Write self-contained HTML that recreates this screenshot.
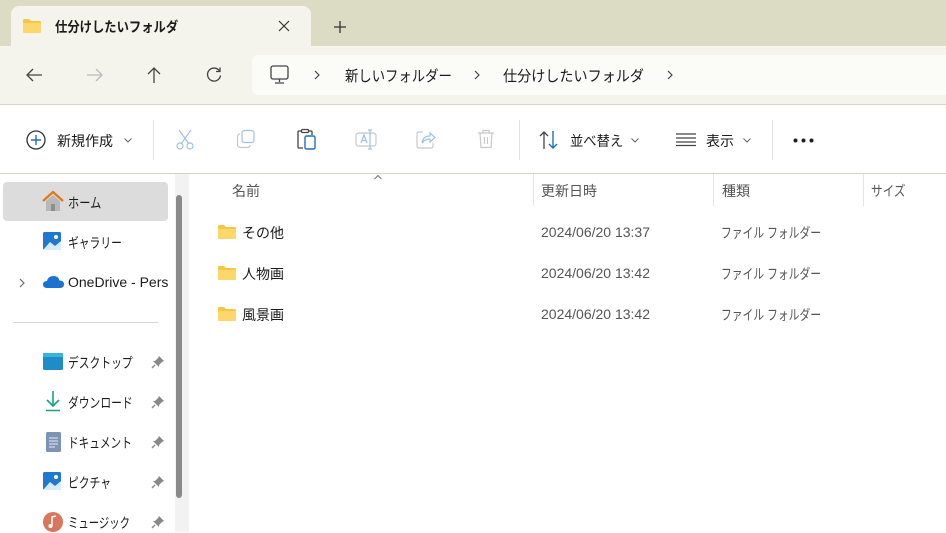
<!DOCTYPE html>
<html><head><meta charset="utf-8"><style>
*{margin:0;padding:0;box-sizing:border-box}
body{width:946px;height:532px;overflow:hidden;background:#fff;font-family:"Liberation Sans","Noto Sans CJK JP",sans-serif;color:#1a1a1a;position:relative;font-size:14px}
.a{position:absolute}
.t{white-space:nowrap;transform-origin:0 50%}
svg{position:absolute;overflow:visible}
</style></head><body>
<div class="a" style="left:0;top:0;width:946px;height:47px;background:#dcdbc3"></div>
<div class="a" style="left:11px;top:6px;width:300px;height:41px;background:#f4f3ec;border-radius:8px 8px 0 0"></div>
<div class="a" style="left:0;top:46px;width:946px;height:59px;background:#f4f3ec;border-bottom:1px solid #d8d5c4"></div>
<!-- tab -->
<svg style="left:23px;top:19px" width="18" height="14"><path d="M0 1.5Q0 0 1.5 0H6L8 2H16.5Q18 2 18 3.5V12.5Q18 14 16.5 14H1.5Q0 14 0 12.5Z" fill="#f7c744"/><path d="M0 4H18V12.5Q18 14 16.5 14H1.5Q0 14 0 12.5Z" fill="#fcd86a"/></svg>
<div class="a t" style="left:55px;top:17px;font-size:14px;font-weight:bold;transform:scaleX(0.88)">仕分けしたいフォルダ</div>
<svg style="left:279px;top:21px" width="10" height="10"><path d="M0 0L10 10M10 0L0 10" stroke="#333" stroke-width="1.2"/></svg>
<svg style="left:334px;top:21px" width="12" height="12"><path d="M6 0V12M0 6H12" stroke="#333" stroke-width="1.3"/></svg>
<!-- nav -->
<svg style="left:26px;top:68px" width="16" height="14"><path d="M16 7H1M7 1L1 7L7 13" stroke="#444" stroke-width="1.3" fill="none"/></svg>
<svg style="left:87px;top:68px" width="16" height="14"><path d="M0 7H15M9 1L15 7L9 13" stroke="#bbb" stroke-width="1.3" fill="none"/></svg>
<svg style="left:147px;top:67px" width="14" height="16"><path d="M7 16V1M1 7L7 1L13 7" stroke="#444" stroke-width="1.3" fill="none"/></svg>
<svg style="left:206px;top:67px" width="16" height="16"><path d="M13.5 4A6.5 6.5 0 1 0 14.5 8.5M14 0.5V4.5H10" stroke="#444" stroke-width="1.3" fill="none"/></svg>
<div class="a" style="left:252px;top:55px;width:694px;height:40px;background:#fbfbf8;border-radius:6px 0 0 6px"></div>
<svg style="left:270px;top:65px" width="20" height="19"><rect x="1" y="1" width="17" height="13" rx="2" fill="none" stroke="#444" stroke-width="1.3"/><path d="M9.5 14V17M5 18H14" stroke="#444" stroke-width="1.3"/></svg>
<svg style="left:314px;top:70px" width="6" height="10"><path d="M1 1L5 5L1 9" fill="none" stroke="#444" stroke-width="1.2"/></svg>
<div class="a t" style="left:345px;top:65px;font-size:15px;transform:scaleX(0.89)">新しいフォルダー</div>
<svg style="left:474px;top:70px" width="6" height="10"><path d="M1 1L5 5L1 9" fill="none" stroke="#444" stroke-width="1.2"/></svg>
<div class="a t" style="left:503px;top:65px;font-size:15px;transform:scaleX(0.94)">仕分けしたいフォルダ</div>
<svg style="left:667px;top:70px" width="6" height="10"><path d="M1 1L5 5L1 9" fill="none" stroke="#444" stroke-width="1.2"/></svg>
<!-- toolbar -->
<svg style="left:26px;top:130px" width="20" height="20"><circle cx="10" cy="10" r="9" fill="none" stroke="#333" stroke-width="1.3"/><path d="M10 5V15M5 10H15" stroke="#1f6fc0" stroke-width="1.4"/></svg>
<div class="a t" style="left:57px;top:131px;font-size:14px">新規作成</div>
<svg style="left:124px;top:138px" width="8" height="5"><path d="M0.5 0.5L4 4L7.5 0.5" fill="none" stroke="#666" stroke-width="1"/></svg>
<div class="a" style="left:153px;top:120px;width:1px;height:40px;background:#e3e3e3"></div>
<svg style="left:176px;top:130px" width="18" height="20"><path d="M3 0L13 14M15 0L5 14" stroke="#9cc2e6" stroke-width="1.2"/><circle cx="4" cy="16" r="3" fill="none" stroke="#9cc2e6" stroke-width="1.2"/><circle cx="14" cy="16" r="3" fill="none" stroke="#9cc2e6" stroke-width="1.2"/></svg>
<svg style="left:237px;top:130px" width="18" height="18"><rect x="5" y="0.5" width="12" height="12" rx="2.5" fill="none" stroke="#9cc2e6" stroke-width="1.2"/><path d="M3 4Q0.5 4 0.5 7V14Q0.5 17.5 4 17.5H10Q13 17.5 13 15" fill="none" stroke="#c8c8c8" stroke-width="1.2"/></svg>
<svg style="left:297px;top:129px" width="20" height="21"><path d="M5 2H2Q1 2 1 3V18Q1 19 2 19H6M11 2H14Q15 2 15 3V6" fill="none" stroke="#444" stroke-width="1.3"/><rect x="4.5" y="0.5" width="7" height="3" rx="1" fill="none" stroke="#444" stroke-width="1.2"/><rect x="8" y="7" width="10" height="13" rx="1.5" fill="none" stroke="#1f6fc0" stroke-width="1.4"/></svg>
<svg style="left:355px;top:130px" width="22" height="20"><rect x="1" y="3" width="20" height="13" rx="2.5" fill="none" stroke="#c8c8c8" stroke-width="1.2"/><path d="M6 13L9 5L12 13M7 10.5H11M15 0V19M13 0H17M13 19H17" fill="none" stroke="#9cc2e6" stroke-width="1.2"/></svg>
<svg style="left:416px;top:130px" width="20" height="19"><path d="M7 2H3Q1 2 1 4V16Q1 18 3 18H15Q17 18 17 16V13" fill="none" stroke="#c8c8c8" stroke-width="1.2"/><path d="M6 13Q7 6 14 6V3L19 7.5L14 12V9Q9 9 6 13Z" fill="none" stroke="#9cc2e6" stroke-width="1.2"/></svg>
<svg style="left:477px;top:129px" width="18" height="20"><path d="M1 4H17M6 4V1.5H12V4M3 4L4 18.5H14L15 4M7.5 8V15M10.5 8V15" fill="none" stroke="#c8c8c8" stroke-width="1.2"/></svg>
<div class="a" style="left:519px;top:120px;width:1px;height:40px;background:#e3e3e3"></div>
<svg style="left:539px;top:131px" width="20" height="18"><path d="M5 18V1M1 5L5 1L9 5" fill="none" stroke="#444" stroke-width="1.3"/><path d="M14 0V17M10 13L14 17L18 13" fill="none" stroke="#1f6fc0" stroke-width="1.4"/></svg>
<div class="a t" style="left:570px;top:131px;font-size:14px;transform:scaleX(0.95)">並べ替え</div>
<svg style="left:631px;top:138px" width="8" height="5"><path d="M0.5 0.5L4 4L7.5 0.5" fill="none" stroke="#666" stroke-width="1"/></svg>
<svg style="left:676px;top:133px" width="20" height="13"><path d="M0 1H20M0 5H20M0 9H20M0 12.5H20" stroke="#444" stroke-width="1.2"/></svg>
<div class="a t" style="left:706px;top:131px;font-size:14px">表示</div>
<svg style="left:743px;top:138px" width="8" height="5"><path d="M0.5 0.5L4 4L7.5 0.5" fill="none" stroke="#666" stroke-width="1"/></svg>
<div class="a" style="left:772px;top:120px;width:1px;height:40px;background:#e3e3e3"></div>
<svg style="left:793px;top:138px" width="22" height="5"><circle cx="2.5" cy="2.5" r="2" fill="#222"/><circle cx="10.5" cy="2.5" r="2" fill="#222"/><circle cx="18.5" cy="2.5" r="2" fill="#222"/></svg>
<div class="a" style="left:0;top:173px;width:946px;height:1px;background:#d6d3c0"></div>
<!-- sidebar -->
<div class="a" style="left:3px;top:182px;width:165px;height:39px;background:#dcdcdc;border-radius:4px"></div>
<div class="a" style="left:175px;top:174px;width:14px;height:358px;background:#f2f2f2"></div>
<div class="a" style="left:176px;top:195px;width:6px;height:303px;background:#8a8a8a;border-radius:3px"></div>
<svg style="left:42px;top:191px" width="22" height="20"><path d="M1 10L11 1L21 10" fill="none" stroke="#e07a1f" stroke-width="2.4" stroke-linejoin="round"/><path d="M4 10V20H18V10L11 4Z" fill="#b8b8b8"/><rect x="9" y="13" width="4" height="7" fill="#8e8e8e"/></svg>
<div class="a t" style="left:68px;top:193px;font-size:14px;transform:scaleX(0.8)">ホーム</div>
<svg style="left:43px;top:232px" width="20" height="19"><rect x="0" y="0" width="18" height="18" rx="1.5" fill="#1f78d1"/><path d="M0 18L7 10L12 14L18 9V18Z" fill="#d9ecff"/><circle cx="13" cy="5" r="2" fill="#fff"/></svg>
<div class="a t" style="left:68px;top:233px;font-size:14px;transform:scaleX(0.77)">ギャラリー</div>
<svg style="left:19px;top:278px" width="6" height="10"><path d="M1 1L5 5L1 9" fill="none" stroke="#666" stroke-width="1.1"/></svg>
<svg style="left:43px;top:276px" width="21" height="12"><path d="M4 12Q0 12 0 8.5Q0 5 4 5Q5 0 10.5 0Q15.5 0 16.5 4.5Q21 4.5 21 8.5Q21 12 17 12Z" fill="#1a73d0"/></svg>
<div class="a t" style="left:68px;top:274px;font-size:14px;width:100px;overflow:hidden">OneDrive - Personal</div>
<div class="a" style="left:13px;top:322px;width:145px;height:1px;background:#d6d6d6"></div>
<svg style="left:43px;top:353px" width="20" height="17"><rect x="0" y="0" width="20" height="17" rx="1.5" fill="#1c8ec5"/><rect x="0" y="0" width="20" height="4" fill="#35b3e4"/></svg>
<div class="a t" style="left:68px;top:353px;font-size:14px;transform:scaleX(0.77)">デスクトップ</div>
<svg style="left:45px;top:391px" width="16" height="21"><path d="M8 0V15M2 9L8 15L14 9M1 19.5H15" fill="none" stroke="#1aa37a" stroke-width="1.6"/></svg>
<div class="a t" style="left:68px;top:393px;font-size:14px;transform:scaleX(0.77)">ダウンロード</div>
<svg style="left:46px;top:432px" width="15" height="20"><rect x="0" y="0" width="15" height="20" rx="1.5" fill="#7d93b3"/><path d="M3 6H12M3 9H12M3 12H12M3 15H9" stroke="#e8eef6" stroke-width="1"/></svg>
<div class="a t" style="left:68px;top:433px;font-size:14px;transform:scaleX(0.76)">ドキュメント</div>
<svg style="left:43px;top:472px" width="20" height="19"><rect x="0" y="0" width="18" height="18" rx="1.5" fill="#1f78d1"/><path d="M0 18L7 10L12 14L18 9V18Z" fill="#d9ecff"/><circle cx="13" cy="5" r="2" fill="#fff"/></svg>
<div class="a t" style="left:68px;top:473px;font-size:14px;transform:scaleX(0.77)">ピクチャ</div>
<svg style="left:43px;top:512px" width="20" height="20"><circle cx="10" cy="10" r="10" fill="#d9765e"/><path d="M9 14V5L13 4" fill="none" stroke="#fff" stroke-width="1.5"/><circle cx="7.5" cy="14" r="2" fill="#fff"/></svg>
<div class="a t" style="left:68px;top:513px;font-size:14px;transform:scaleX(0.74)">ミュージック</div>
<!-- header -->
<svg style="left:374px;top:175px" width="8" height="5"><path d="M0.5 4L4 0.5L7.5 4" fill="none" stroke="#777" stroke-width="1"/></svg>
<div class="a t" style="left:232px;top:181px;font-size:14px;color:#555">名前</div>
<div class="a" style="left:533px;top:174px;width:1px;height:32px;background:#e5e5e5"></div>
<div class="a t" style="left:541px;top:181px;font-size:14px;color:#555">更新日時</div>
<div class="a" style="left:713px;top:174px;width:1px;height:32px;background:#e5e5e5"></div>
<div class="a t" style="left:722px;top:181px;font-size:14px;color:#555">種類</div>
<div class="a" style="left:863px;top:174px;width:1px;height:32px;background:#e5e5e5"></div>
<div class="a t" style="left:871px;top:181px;font-size:14px;color:#555;transform:scaleX(0.83)">サイズ</div>
<!-- rows -->
<svg style="left:218px;top:225px" width="18" height="14"><path d="M0 1.5Q0 0 1.5 0H6L8 2H16.5Q18 2 18 3.5V12.5Q18 14 16.5 14H1.5Q0 14 0 12.5Z" fill="#f7c744"/><path d="M0 4H18V12.5Q18 14 16.5 14H1.5Q0 14 0 12.5Z" fill="#fcd86a"/></svg>
<div class="a t" style="left:242px;top:223px;font-size:14px">その他</div>
<div class="a t" style="left:541px;top:224px;font-size:14px;color:#555">2024/06/20 13:37</div>
<div class="a t" style="left:721px;top:223px;font-size:14px;color:#555;transform:scaleX(0.77)">ファイル フォルダー</div>
<svg style="left:218px;top:266px" width="18" height="14"><path d="M0 1.5Q0 0 1.5 0H6L8 2H16.5Q18 2 18 3.5V12.5Q18 14 16.5 14H1.5Q0 14 0 12.5Z" fill="#f7c744"/><path d="M0 4H18V12.5Q18 14 16.5 14H1.5Q0 14 0 12.5Z" fill="#fcd86a"/></svg>
<div class="a t" style="left:242px;top:264px;font-size:14px">人物画</div>
<div class="a t" style="left:541px;top:265px;font-size:14px;color:#555">2024/06/20 13:42</div>
<div class="a t" style="left:721px;top:264px;font-size:14px;color:#555;transform:scaleX(0.77)">ファイル フォルダー</div>
<svg style="left:218px;top:307px" width="18" height="14"><path d="M0 1.5Q0 0 1.5 0H6L8 2H16.5Q18 2 18 3.5V12.5Q18 14 16.5 14H1.5Q0 14 0 12.5Z" fill="#f7c744"/><path d="M0 4H18V12.5Q18 14 16.5 14H1.5Q0 14 0 12.5Z" fill="#fcd86a"/></svg>
<div class="a t" style="left:242px;top:305px;font-size:14px">風景画</div>
<div class="a t" style="left:541px;top:306px;font-size:14px;color:#555">2024/06/20 13:42</div>
<div class="a t" style="left:721px;top:305px;font-size:14px;color:#555;transform:scaleX(0.77)">ファイル フォルダー</div>
<!-- pins -->
<svg style="left:151px;top:355px" width="14" height="14"><path d="M8 1L13 6L11 7L8 10L8 12L2 6L4 6L7 3Z" fill="#888"/><path d="M4 10L1 13" stroke="#888" stroke-width="1.3"/></svg>
<svg style="left:151px;top:395px" width="14" height="14"><path d="M8 1L13 6L11 7L8 10L8 12L2 6L4 6L7 3Z" fill="#888"/><path d="M4 10L1 13" stroke="#888" stroke-width="1.3"/></svg>
<svg style="left:151px;top:435px" width="14" height="14"><path d="M8 1L13 6L11 7L8 10L8 12L2 6L4 6L7 3Z" fill="#888"/><path d="M4 10L1 13" stroke="#888" stroke-width="1.3"/></svg>
<svg style="left:151px;top:475px" width="14" height="14"><path d="M8 1L13 6L11 7L8 10L8 12L2 6L4 6L7 3Z" fill="#888"/><path d="M4 10L1 13" stroke="#888" stroke-width="1.3"/></svg>
<svg style="left:151px;top:515px" width="14" height="14"><path d="M8 1L13 6L11 7L8 10L8 12L2 6L4 6L7 3Z" fill="#888"/><path d="M4 10L1 13" stroke="#888" stroke-width="1.3"/></svg>
</body></html>
